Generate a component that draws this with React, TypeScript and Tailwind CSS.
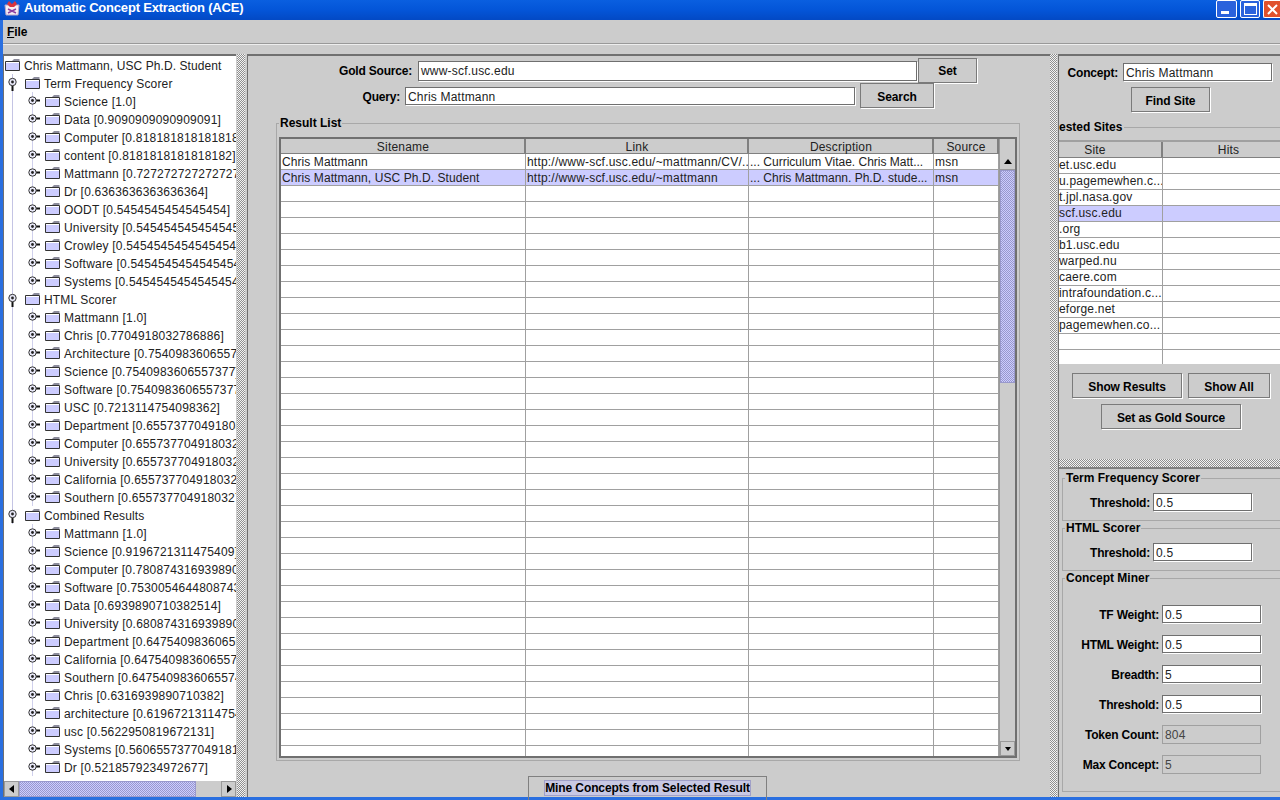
import React from 'react';

const dots = 'bg-[repeating-conic-gradient(#f4f4f4_0_25%,#8f8f8f_0_50%)] bg-[length:2px_2px]';
const thumb = 'bg-[repeating-conic-gradient(#ccccff_0_25%,#9999cc_0_50%)] bg-[length:2px_2px]';
const btn =
  'flex shrink-0 items-center justify-center border border-[#7a7a7a] bg-[#cccccc] pt-[2px] font-bold tracking-[-0.1px] text-black shadow-[1px_1px_0_#ffffff]';
const field = 'flex shrink-0 items-center border border-[#6f6f6f] bg-white pl-[2px] pt-[1px] text-[#222] shadow-[1px_1px_0_#ffffff]';

const Folder = () => (
  <svg width="17" height="14" viewBox="0 0 17 14" className="shrink-0">
    <path d="M1.5 3.5h14v9h-14z" fill="#ccccff" stroke="#333" />
    <path d="M2 4.5h13" stroke="#fff" />
    <path d="M8 3l2-2h5.5v2z" fill="#8c8c9c" />
  </svg>
);

// handle for a tree node, with the connecting lines that run through its row
const Gutter = ({ level, last }: { level: 1 | 2; last?: boolean }) =>
  level === 1 ? (
    <svg width="20" height="18" viewBox="0 0 20 18" className="shrink-0">
      <path d="M8.5 0v18" stroke="#c4c4e4" />
      <path d="M8.5 10v7" stroke="#111" strokeWidth="2" />
      <circle cx="8.5" cy="8" r="3.7" fill="#e8e8f8" stroke="#333" />
      <circle cx="8.5" cy="8" r="1.4" fill="#222" />
    </svg>
  ) : (
    <svg width="40" height="18" viewBox="0 0 40 18" className="shrink-0">
      {!last && <path d="M8.5 0v18" stroke="#c4c4e4" />}
      <path d="M28.5 0v18" stroke="#d0d0ec" />
      <path d="M30 8.5h6" stroke="#111" strokeWidth="2" />
      <circle cx="28.5" cy="8.5" r="3.7" fill="#e8e8f8" stroke="#333" />
      <circle cx="28.5" cy="8.5" r="1.4" fill="#222" />
    </svg>
  );

const Arrow = ({ dir }: { dir: 'up' | 'down' | 'left' | 'right' }) => {
  const d = { up: 'M1 7h8L5 2z', down: 'M2 3h6L5 7z', left: 'M7 1v8L2 5z', right: 'M3 1v8l5-4z' }[dir];
  return (
    <svg width="10" height="10" viewBox="0 0 10 10">
      <path d={d} fill="#000" />
    </svg>
  );
};

const tree: { name: string; items: string[] }[] = [
  {
    name: 'Term Frequency Scorer',
    items: [
      'Science [1.0]',
      'Data [0.9090909090909091]',
      'Computer [0.8181818181818182]',
      'content [0.8181818181818182]',
      'Mattmann [0.7272727272727273]',
      'Dr [0.6363636363636364]',
      'OODT [0.5454545454545454]',
      'University [0.5454545454545454]',
      'Crowley [0.5454545454545454]',
      'Software [0.5454545454545454]',
      'Systems [0.5454545454545454]',
    ],
  },
  {
    name: 'HTML Scorer',
    items: [
      'Mattmann [1.0]',
      'Chris [0.7704918032786886]',
      'Architecture [0.7540983606557377]',
      'Science [0.7540983606557377]',
      'Software [0.7540983606557377]',
      'USC [0.7213114754098362]',
      'Department [0.6557377049180327]',
      'Computer [0.6557377049180327]',
      'University [0.6557377049180327]',
      'California [0.6557377049180327]',
      'Southern [0.6557377049180327]',
    ],
  },
  {
    name: 'Combined Results',
    items: [
      'Mattmann [1.0]',
      'Science [0.9196721311475409]',
      'Computer [0.7808743169398907]',
      'Software [0.7530054644808743]',
      'Data [0.6939890710382514]',
      'University [0.6808743169398907]',
      'Department [0.6475409836065574]',
      'California [0.6475409836065574]',
      'Southern [0.6475409836065574]',
      'Chris [0.6316939890710382]',
      'architecture [0.6196721311475409]',
      'usc [0.5622950819672131]',
      'Systems [0.5606557377049181]',
      'Dr [0.5218579234972677]',
    ],
  },
];

const results = [
  ['Chris Mattmann', 'http://www-scf.usc.edu/~mattmann/CV/...', '... Curriculum Vitae. Chris Matt...', 'msn'],
  ['Chris Mattmann, USC Ph.D. Student', 'http://www-scf.usc.edu/~mattmann', '... Chris Mattmann. Ph.D. stude...', 'msn'],
];

const sites = [
  'et.usc.edu',
  'u.pagemewhen.c...',
  't.jpl.nasa.gov',
  'scf.usc.edu',
  '.org',
  'b1.usc.edu',
  'warped.nu',
  'caere.com',
  'intrafoundation.c...',
  'eforge.net',
  'pagemewhen.co...',
  '',
  '',
];

const colWidths = ['w-[245px]', 'w-[223px]', 'w-[185px]', 'w-[65px]'];
const colNames = ['Sitename', 'Link', 'Description', 'Source'];
const colTracking = ['tracking-[0.08px]', '', 'tracking-[0px]', ''];

const LabeledField = ({
  label,
  value,
  labelW,
  inputW,
  disabled,
}: {
  label: string;
  value: string;
  labelW: string;
  inputW: string;
  disabled?: boolean;
}) => (
  <div className="flex h-[18px] items-center gap-[3px]">
    <span className={`${labelW} shrink-0 pt-[1px] text-right font-bold tracking-[-0.2px] text-black`}>{label}</span>
    {disabled ? (
      <div className={`${inputW} flex h-[19px] shrink-0 items-center border border-[#a0a0a0] pl-[2px] pt-[1px] text-[#444]`}>{value}</div>
    ) : (
      <div className={`${inputW} ${field} h-[18px]`}>{value}</div>
    )}
  </div>
);

export default function App() {
  return (
    <div
      className="flex h-[800px] w-[1280px] flex-col overflow-hidden bg-[#cccccc] text-[12px] leading-[14px] tracking-[0.2px] text-[#222]"
      style={{ fontFamily: '"Liberation Sans", Arial, sans-serif' }}
    >
      {/* title bar */}
      <div className="flex h-[20px] shrink-0 items-start bg-gradient-to-b from-[#0a5fe0] via-[#0455d8] to-[#0349c4] pl-[4px]">
        <svg width="16" height="16" viewBox="0 0 16 16" className="shrink-0">
          <path d="M1 5h14l-1 10H2z" fill="#f6eef2" stroke="#b9a6c8" />
          <path d="M5 1l3 3 3-3 2 3-3 3H6L3 4z" fill="#d8343c" />
          <path d="M4 9l8 4M12 9l-8 4" stroke="#8a3fa0" strokeWidth="1.5" />
        </svg>
        <span className="ml-[4px] whitespace-nowrap text-[13px] font-bold leading-[16px] tracking-[-0.2px] text-white">
          Automatic Concept Extraction (ACE)
        </span>
        <div className="ml-auto flex h-[18px] gap-[3px]">
          <div className="flex h-[18px] w-[21px] items-end rounded-[2px] border border-white bg-[#2a62dc] pb-[3px] pl-[4px]">
            <div className="h-[3px] w-[8px] bg-white" />
          </div>
          <div className="flex h-[18px] w-[20px] items-center justify-center rounded-[2px] border border-white bg-[#2a62dc]">
            <div className="h-[12px] w-[13px] border border-t-[3px] border-white" />
          </div>
          <div className="flex h-[18px] w-[17px] items-center justify-center rounded-l-[2px] border border-r-0 border-white bg-[#e0512c]">
            <svg width="13" height="13" viewBox="0 0 13 13">
              <path d="M2 2l9 9M11 2l-9 9" stroke="#fff" strokeWidth="2" />
            </svg>
          </div>
        </div>
      </div>

      <div className="flex min-h-0 flex-1 flex-col border-b-[3px] border-l-[3px] border-[#2a6fe0]">
        {/* menu bar */}
        <div className="flex h-[24px] shrink-0 items-center border-b border-[#999] pl-[4px] shadow-[0_1px_0_#eeeeee]">
          <span className="font-bold tracking-[-0.1px] text-black">
            <span className="underline">F</span>ile
          </span>
        </div>

        <div className="mt-[10px] flex min-h-0 flex-1">
          {/* concept tree */}
          <div className="flex w-[233px] shrink-0 flex-col border-t-2 border-l border-[#707070] bg-white">
            <div className="min-h-0 flex-1 overflow-hidden">
              <div className="flex h-[18px] items-center whitespace-nowrap">
                <Folder />
                <span className="ml-[3px] pt-[1px] tracking-[0.08px]">Chris Mattmann, USC Ph.D. Student</span>
              </div>
              {tree.map((group, g) => (
                <div key={group.name}>
                  <div className="flex h-[18px] items-center whitespace-nowrap">
                    <Gutter level={1} />
                    <Folder />
                    <span className="ml-[3px] pt-[1px] tracking-[0.15px]">{group.name}</span>
                  </div>
                  {group.items.map((item) => (
                    <div key={item} className="flex h-[18px] items-center whitespace-nowrap">
                      <Gutter level={2} last={g === 2} />
                      <Folder />
                      <span className="ml-[3px] pt-[1px]">{item}</span>
                    </div>
                  ))}
                </div>
              ))}
            </div>
            <div className="flex h-[16px] shrink-0 items-stretch bg-[#cccccc]">
              <div className="flex w-[15px] items-center justify-center border border-[#999]">
                <Arrow dir="left" />
              </div>
              <div className={`w-[177px] border border-[#9999cc] ${thumb}`} />
              <div className="flex-1" />
              <div className="flex w-[15px] items-center justify-center border border-[#999]">
                <Arrow dir="right" />
              </div>
            </div>
          </div>

          <div className="flex w-[11px] shrink-0 justify-end">
            <div className={`mr-[2px] w-[8px] ${dots}`} />
          </div>

          {/* results */}
          <div className="flex w-[803px] shrink-0 flex-col border-t-2 border-l border-[#707070]">
            <div className="mt-[2px] flex h-[25px] items-center">
              <span className="w-[164px] shrink-0 text-right font-bold tracking-[-0.2px] text-black">Gold Source:</span>
              <div className={`ml-[6px] h-[20px] w-[499px] ${field} !pt-0`}>www-scf.usc.edu</div>
              <div className={`ml-[1px] h-[25px] w-[59px] ${btn} !pt-0`}>Set</div>
            </div>
            <div className="flex h-[25px] items-center">
              <span className="w-[152px] shrink-0 pt-[2px] text-right font-bold tracking-[-0.2px] text-black">Query:</span>
              <div className={`ml-[5px] h-[18px] w-[450px] ${field} !pt-[2px]`}>Chris Mattmann</div>
              <div className={`ml-[5px] h-[25px] w-[74px] ${btn}`}>Search</div>
            </div>

            <fieldset className="mt-[8px] ml-[28px] h-[645px] w-[744px] shrink-0 border border-[#a8a8a8] px-[2px] pb-[2px] pt-[7px]">
              <legend className="ml-0 px-[1px] font-bold tracking-[0px] text-black">Result List</legend>
              <div className="flex h-[621px] border-2 border-[#707070] bg-[#cccccc]">
                <div className="w-[718px] shrink-0 overflow-hidden">
                  <div className="flex h-[15px] text-center leading-[16px] text-[#222]">
                    {colNames.map((c, i) => (
                      <div key={c} className={`${colWidths[i]} shrink-0 border-r-2 border-b border-[#808080] bg-[#cccccc] pl-[1px]`}>
                        {c}
                      </div>
                    ))}
                  </div>
                  {Array.from({ length: 38 }).map((_, r) => (
                    <div key={r} className={`flex h-[16px] leading-[16px] ${r === 1 ? 'bg-[#ccccff]' : 'bg-white'}`}>
                      {colWidths.map((w, i) => (
                        <div
                          key={i}
                          className={`${w} ${colTracking[i]} shrink-0 overflow-hidden whitespace-nowrap border-r border-b border-[#a0a0a0] pl-[1px]`}
                        >
                          {results[r]?.[i] ?? ''}
                        </div>
                      ))}
                    </div>
                  ))}
                </div>
                <div className="flex w-[16px] flex-col border-l border-[#999]">
                  <div className="mt-[15px] flex h-[16px] items-center justify-center border-b border-[#999] bg-[#cccccc]">
                    <Arrow dir="up" />
                  </div>
                  <div className={`h-[213px] border border-[#9999cc] ${thumb}`} />
                  <div className="flex-1" />
                  <div className="flex h-[15px] items-center justify-center border border-[#999]">
                    <Arrow dir="down" />
                  </div>
                </div>
              </div>
            </fieldset>

            <div className="ml-[280px] mt-[15px] flex h-[26px] w-[239px] shrink-0 items-start justify-center border border-[#808080] pt-[4px]">
              <span className="bg-[#c8c8e4] font-bold tracking-[-0.1px] text-black outline outline-1 outline-[#a0a0c8]">
                Mine Concepts from Selected Result
              </span>
            </div>
          </div>

          <div className="flex w-[8px] shrink-0">
            <div className={`w-[7px] ${dots}`} />
          </div>

          {/* concept and sites */}
          <div className="flex min-w-0 flex-1 flex-col overflow-hidden border-t-2 border-l border-[#707070]">
            <div className="mt-[7px]">
              <LabeledField label="Concept:" value="Chris Mattmann" labelW="w-[59px]" inputW="w-[149px] ml-[2px]" />
            </div>
            <div className={`ml-[72px] mt-[6px] h-[25px] w-[79px] ${btn}`}>Find Site</div>
            <div className="mt-[8px] flex h-[14px] items-center">
              <span className="font-bold tracking-[0px] text-black">ested Sites</span>
              <div className="ml-[2px] h-px flex-1 bg-[#a8a8a8]" />
            </div>
            <div className="mt-[6px] h-[224px] overflow-hidden border-t-2 border-[#a0a0a0] bg-white">
              <div className="flex h-[16px] bg-[#cccccc] text-center leading-[16px]">
                <div className="w-[104px] shrink-0 border-r-2 border-b border-[#808080] pr-[30px]">Site</div>
                <div className="flex-1 border-b border-[#808080] pl-[14px]">Hits</div>
              </div>
              {sites.map((s, i) => (
                <div key={i} className={`flex h-[16px] ${i === 3 ? 'bg-[#ccccff]' : ''}`}>
                  <div className="w-[104px] shrink-0 overflow-hidden whitespace-nowrap border-r border-b border-[#a0a0a0]">{s}</div>
                  <div className="flex-1 border-b border-[#a0a0a0]" />
                </div>
              ))}
            </div>
            <div className="ml-[13px] mt-[9px] flex gap-[6px]">
              <div className={`h-[25px] w-[110px] ${btn}`}>Show Results</div>
              <div className={`h-[25px] w-[82px] ${btn}`}>Show All</div>
            </div>
            <div className={`ml-[42px] mt-[6px] h-[25px] w-[140px] ${btn}`}>Set as Gold Source</div>
            <div className={`mt-[30px] h-[8px] w-full shrink-0 ${dots}`} />
            <div className="border-t-2 border-[#808080] pl-[3px]">
              <fieldset className="mt-[2px] h-[50px] border border-r-0 border-[#a8a8a8] pt-[8px]">
                <legend className="ml-[2px] px-[1px] font-bold tracking-[0px] text-black">Term Frequency Scorer</legend>
                <LabeledField label="Threshold:" value="0.5" labelW="w-[87px]" inputW="w-[99px]" />
              </fieldset>
              <fieldset className="h-[50px] border border-r-0 border-[#a8a8a8] pt-[8px]">
                <legend className="ml-[2px] px-[1px] font-bold tracking-[0px] text-black">HTML Scorer</legend>
                <LabeledField label="Threshold:" value="0.5" labelW="w-[87px]" inputW="w-[99px]" />
              </fieldset>
              <fieldset className="h-[221px] border border-r-0 border-[#a8a8a8] pt-[20px]">
                <legend className="ml-[2px] px-[1px] font-bold tracking-[0px] text-black">Concept Miner</legend>
                <div className="flex flex-col gap-[12px]">
                  <LabeledField label="TF Weight:" value="0.5" labelW="w-[96px]" inputW="w-[99px]" />
                  <LabeledField label="HTML Weight:" value="0.5" labelW="w-[96px]" inputW="w-[99px]" />
                  <LabeledField label="Breadth:" value="5" labelW="w-[96px]" inputW="w-[99px]" />
                  <LabeledField label="Threshold:" value="0.5" labelW="w-[96px]" inputW="w-[99px]" />
                  <LabeledField label="Token Count:" value="804" labelW="w-[96px]" inputW="w-[99px]" disabled />
                  <LabeledField label="Max Concept:" value="5" labelW="w-[96px]" inputW="w-[99px]" disabled />
                </div>
              </fieldset>
            </div>
          </div>
        </div>
      </div>
    </div>
  );
}
